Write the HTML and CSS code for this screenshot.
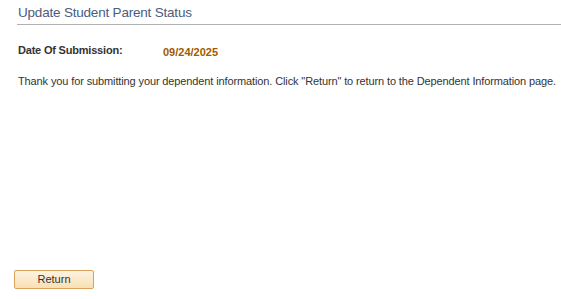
FILE: index.html
```html
<!DOCTYPE html>
<html>
<head>
<meta charset="utf-8">
<link rel="stylesheet" href="styles.css">
</head>
<body>
<div class="page">
  <h1 class="title">Update Student Parent Status</h1>
  <div class="row">
    <span class="label">Date Of Submission:</span>
    <span class="value">09/24/2025</span>
  </div>
  <p class="msg">Thank you for submitting your dependent information. Click "Return" to return to the Dependent Information page.</p>
  <div class="actions">
    <button class="btn">Return</button>
  </div>
</div>
</body>
</html>
```
FILE: styles.css
```css
html, body {
  margin: 0;
  padding: 0;
  background: #ffffff;
}
body {
  font-family: "Liberation Sans", Arial, sans-serif;
  width: 561px;
  height: 299px;
  overflow: hidden;
}
.page {
  display: flex;
  flex-direction: column;
  padding: 0 0 0 17px;
  height: 299px;
  box-sizing: border-box;
}
.title {
  margin: 0;
  padding: 5px 0 4px 1px;
  font-size: 13.5px;
  letter-spacing: -0.2px;
  font-weight: normal;
  color: #4d5b7c;
  line-height: 15px;
  border-bottom: 1px solid #b1b1b1;
}
.row {
  display: flex;
  margin-top: 19px;
  padding-left: 1px;
  font-size: 11px;
  font-weight: bold;
  line-height: 13px;
}
.label {
  color: #333333;
  width: 145px;
  letter-spacing: -0.2px;
}
.value {
  color: #a05a00;
  margin-top: 2px;
}
.msg {
  margin: 16px 0 0 0;
  padding-left: 1px;
  font-size: 11px;
  letter-spacing: -0.12px;
  white-space: nowrap;
  line-height: 13px;
  color: #333333;
}
.actions {
  margin-top: auto;
  margin-bottom: 10px;
  margin-left: -3px;
}
.btn {
  width: 80px;
  height: 19px;
  padding: 0;
  border: 1px solid #d9a35e;
  border-radius: 2px;
  background: linear-gradient(#fdf3e1, #f8e0b3);
  font-family: "Liberation Sans", Arial, sans-serif;
  font-size: 11px;
  color: #333333;
  line-height: 17px;
}
```
